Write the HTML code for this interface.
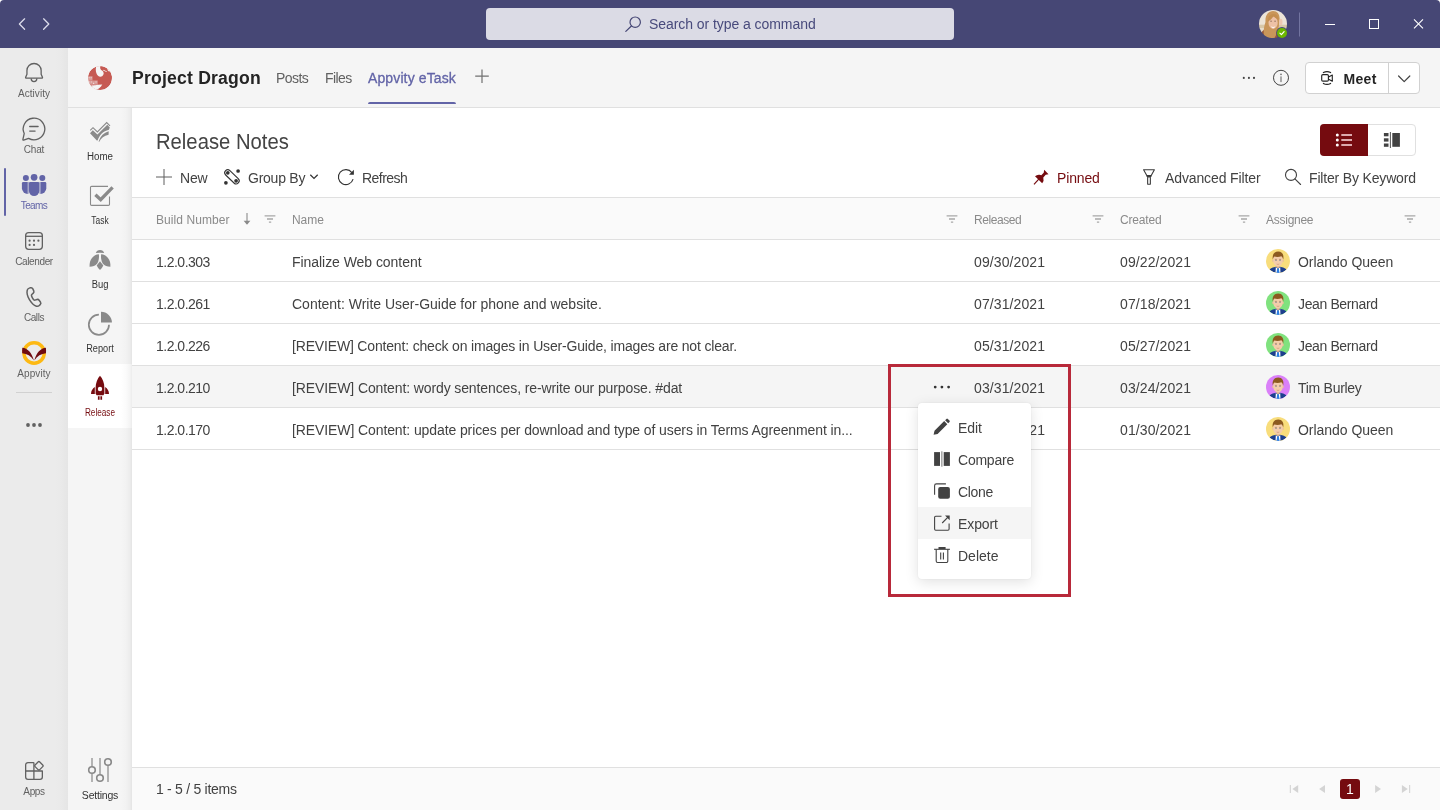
<!DOCTYPE html>
<html lang="en">
<head>
<meta charset="utf-8">
<title>Project Dragon - Appvity eTask - Release Notes</title>
<style>
*{box-sizing:border-box;margin:0;padding:0}
html,body{width:1440px;height:810px;overflow:hidden;background:#fff}
body{font-family:"Liberation Sans",Arial,sans-serif;font-size:14px;color:#424242;position:relative}
#app{position:absolute;left:0;top:0;width:1440px;height:810px;will-change:transform}
svg{display:block;position:absolute;overflow:visible}
.t{position:absolute;white-space:nowrap;line-height:1}

/* title bar */
#titlebar{position:absolute;left:0;top:0;width:1440px;height:48px;background:#464775;border-radius:4px 4px 0 0}
#search{position:absolute;left:486px;top:8px;width:468px;height:32px;background:#dbdbe5;border-radius:4px}
#search .t{left:163px;top:9px;font-size:14px;color:#484a7c}

/* left rail */
#rail{position:absolute;left:0;top:48px;width:68px;height:762px;background:linear-gradient(90deg,#ebebeb 0,#ebebeb 56px,#e9e9e9 62px,#e5e5e5 68px)}
.ri{position:absolute;left:0;width:68px;height:56px}
.ri .lbl{position:absolute;left:0;width:68px;text-align:center;top:36px;font-size:10px;line-height:12px;color:#616161}
.ri.on .lbl{color:#6264a7}
.ri.on:before{content:"";position:absolute;left:4px;top:4px;width:2px;height:48px;background:#6264a7;border-radius:1px}
#rail .sep{position:absolute;left:16px;top:344px;width:36px;height:1px;background:#d1d1d1}

/* channel header */
#chead{position:absolute;left:68px;top:48px;width:1372px;height:60px;background:#f5f5f5;border-bottom:1px solid #e0e0e0}
#chead .tab{font-size:14px;color:#616161;top:23px}
#chead .tab.on{color:#6264a7;-webkit-text-stroke:.3px #6264a7}
#chead .tab.on:after{content:"";position:absolute;left:0;right:0;top:30.800px;height:2.500px;border-radius:2px 2px 0 0;background:#6264a7}
#meet{position:absolute;left:1237px;top:14px;width:115px;height:32px;background:#fff;border:1px solid #d1d1d1;border-radius:4px}
#meet .div{position:absolute;left:82px;top:0;width:1px;height:30px;background:#d1d1d1}
#meet .t{left:37.500px;top:9px;font-size:14px;font-weight:700;color:#242424}

/* app nav */
#appnav{position:absolute;left:68px;top:108px;width:64px;height:702px;background:linear-gradient(90deg,#f5f5f5 0,#f5f5f5 53px,#f2f2f2 58px,#ececec 62px,#e4e4e4 64px)}
.ni{position:absolute;left:0;width:64px;height:64px}
.ni .lbl{position:absolute;left:0;width:64px;text-align:center;top:43px;font-size:10px;line-height:12px;color:#333}
.ni.on{background:linear-gradient(90deg,#fff 0,#fff 53px,#fbfbfb 58px,#f4f4f4 62px,#ececec 64px)}
.ni.on .lbl{color:#750b0f}

/* content */
#content{position:absolute;left:132px;top:108px;width:1308px;height:702px;background:#fff}
#title{left:24px;top:23px;font-size:22px;color:#444;transform:scaleX(.92);transform-origin:0 50%}
.tb{top:63px;font-size:14px;color:#424242}
#views{position:absolute;left:1188px;top:16px;width:96px;height:32px;border:1px solid #e0e0e0;border-radius:4px;background:#fff}
#views .on{position:absolute;left:-1px;top:-1px;width:48px;height:32px;background:#750b0f;border-radius:4px 0 0 4px}
.hdr{position:absolute;left:0;top:89px;width:1308px;height:43px;background:#fafafa;border-top:1px solid #e0e0e0;border-bottom:1px solid #e0e0e0}
.hdr .t{top:16px;font-size:12px;color:#8a8a8a}
.row{position:absolute;left:0;width:1308px;height:42px;border-bottom:1px solid #e0e0e0}
.row .t{top:15px;font-size:14px;color:#424242}
.row.hl{background:#f5f5f5}
.c1{left:24px;letter-spacing:-.5px}
.c2{left:160px}
.c3{left:842px;letter-spacing:.1px}
.c4{left:988px;letter-spacing:.1px}
.c5{left:1166px}
.av{position:absolute;left:1134px;top:9px;width:24px;height:24px;border-radius:50%;overflow:hidden}
#footer{position:absolute;left:0;top:659px;width:1308px;height:43px;background:#fafafa;border-top:1px solid #e0e0e0}
#footer .t{left:24px;top:14px;font-size:14px;color:#424242}
#pg1{position:absolute;left:1208px;top:11px;width:20px;height:20px;border-radius:3px;background:#750b0f;color:#fff;font-size:14px;line-height:20px;text-align:center}

/* menu */
#redbox{position:absolute;left:888px;top:364px;width:183px;height:233px;border:3px solid #b8293a}
#menu{position:absolute;left:918px;top:403px;width:113px;height:176px;background:#fff;border-radius:4px;box-shadow:0 3px 14px rgba(0,0,0,.12),0 0 2px rgba(0,0,0,.07)}
.mi{position:absolute;left:0;width:113px;height:32px}
.mi .t{left:40px;top:10px;font-size:14px;color:#424242}
.mi.hov{background:#f5f5f5}
</style>
</head>
<body>
<div id="app">
<!-- ===== Title bar ===== -->
<div id="titlebar">
  <svg width="1440" height="48" viewBox="0 0 1440 48" fill="none">
    <g stroke="#dedeec" stroke-width="1.25" stroke-linecap="round" stroke-linejoin="round">
      <path d="M24.6 18.8 19.4 24l5.2 5.3"/>
      <path d="M43.6 18.8 48.8 24l-5.2 5.3"/>
    </g>
    <!-- user avatar -->
    <defs><clipPath id="avc"><circle cx="1273" cy="24" r="14"/></clipPath><filter id="avb" x="-10%" y="-10%" width="120%" height="120%"><feGaussianBlur stdDeviation=".45"/></filter></defs>
    <g clip-path="url(#avc)"><g filter="url(#avb)">
      <rect x="1257" y="8" width="32" height="32" fill="#ece4d7"/>
      <rect x="1257" y="24.700" width="32" height="3.500" fill="#d8c8a8"/>
      <rect x="1257" y="28.200" width="32" height="12" fill="#e6dccb"/>
      <path d="M1259.500 39c0-6 3.500-10 8.500-10.500h11c1 3 1 7 0 10.500z" fill="#99593a"/>
      <path d="M1265.500 22c-.5-7 3-11 7.500-11s7 3.500 6.600 9l-.6 6-2 7-3 6h-9.500c-1.500-6-.800-12 1-17z" fill="#c9965a"/>
      <ellipse cx="1273.100" cy="22.800" rx="4.600" ry="6.100" fill="#edc1a6"/>
      <path d="M1267.600 21.500c.2-5 2.400-7.500 5.900-7.500 3 0 5 2 5.300 5.500-2.300-.5-4.300-2-5.300-3.700-1 2.500-3.200 4.700-5.900 5.700z" fill="#c48e50"/>
      <ellipse cx="1280.800" cy="22" rx="1.700" ry="3.200" fill="#eec8b1"/>
      <path d="M1271 26.300c1.500.9 3 .9 4.400 0-.5 1.300-1.300 1.900-2.200 1.900s-1.700-.6-2.200-1.900z" fill="#fbf3ee"/>
      <path d="M1270.200 21.200h1.800M1274.200 21.200h1.800" stroke="#8a6a55" stroke-width=".8"/>
    </g></g>
    <circle cx="1282" cy="33" r="5.900" fill="#464775"/>
    <circle cx="1282" cy="33" r="5" fill="#6bb700"/>
    <path d="M1279.900 33.200l1.500 1.500 2.700-3" stroke="#fff" stroke-width="1.200" stroke-linecap="round" stroke-linejoin="round"/>
    <path d="M1299.500 12.500v24" stroke="#7274a0" stroke-width="1"/>
    <g stroke="#fff" stroke-width="1">
      <path d="M1325 24.500h10"/>
      <rect x="1369.500" y="19.500" width="9" height="9"/>
      <path d="M1414 19.300l9 9M1423 19.300l-9 9" stroke-width="1.100"/>
    </g>
  </svg>
  <div id="search">
    <svg width="20" height="20" viewBox="624 14 20 20" style="left:138px;top:6px" fill="none" stroke="#464775" stroke-width="1.200" stroke-linecap="round">
      <circle cx="635.200" cy="22.200" r="5.200"/><path d="M631.400 26l-5.600 5.400"/>
    </svg>
    <span class="t" style="letter-spacing:-0.06px">Search or type a command</span>
  </div>
</div>

<!-- ===== Left app rail ===== -->
<div id="rail">
  <div class="ri" style="top:4px">
    <svg width="68" height="56" viewBox="0 52 68 56" fill="none" stroke="#616161" stroke-width="1.300" stroke-linejoin="round" stroke-linecap="round">
      <path d="M26.950 70.600a7.100 7.100 0 0 1 14.200 0v3.600l1.300 3.100c.2.500-.1.900-.6.900H26.250c-.5 0-.8-.4-.6-.9l1.300-3.100z"/>
      <path d="M31.200 78.800a2.800 2.800 0 0 0 5.600 0"/>
    </svg>
    <span class="lbl" style="letter-spacing:0.06px">Activity</span>
  </div>
  <div class="ri" style="top:60px">
    <svg width="68" height="56" viewBox="0 108 68 56" fill="none" stroke="#616161" stroke-width="1.300" stroke-linejoin="round" stroke-linecap="round">
      <path d="M28.600 138.350A10.800 10.800 0 1 0 24.210 133.560L22.900 139.300Q22.700 140.300 23.700 140.100Z"/>
      <path d="M29.700 126.500h8.400M29.700 131.100h5.400"/>
    </svg>
    <span class="lbl" style="letter-spacing:-0.2px">Chat</span>
  </div>
  <div class="ri on" style="top:116px">
    <svg width="68" height="56" viewBox="0 164 68 56" fill="#6264a7">
      <circle cx="25.900" cy="177.900" r="3"/><circle cx="34.100" cy="177.300" r="3.350"/><circle cx="42.300" cy="177.900" r="3"/>
      <path d="M28.900 183.400Q28.900 182.100 30.200 182.100H38Q39.300 182.100 39.300 183.400V190.700A5.200 5.200 0 0 1 28.900 190.700Z"/>
      <path d="M23.200 182.100H27.700V194A5.900 5.900 0 0 1 21.900 188.300V183.400Q21.900 182.100 23.200 182.100Z"/>
      <path d="M45 182.100H40.500V194A5.900 5.900 0 0 0 46.300 188.300V183.400Q46.300 182.100 45 182.100Z"/>
      <path d="M27.700 182.100h1.200v11.500q-.6.300-1.200.4zM40.500 182.100h-1.200v11.500q.6.300 1.200.4z" opacity=".5"/>
    </svg>
    <span class="lbl" style="letter-spacing:-0.58px">Teams</span>
  </div>
  <div class="ri" style="top:172px">
    <svg width="68" height="56" viewBox="0 220 68 56" fill="none" stroke="#616161" stroke-width="1.300">
      <rect x="25.650" y="232.550" width="16.700" height="16.800" rx="3"/>
      <path d="M25.650 236.300h16.700"/>
      <g fill="#616161" stroke="none"><circle cx="29.600" cy="240.700" r="1.100"/><circle cx="34" cy="240.700" r="1.100"/><circle cx="38.400" cy="240.700" r="1.100"/><circle cx="29.600" cy="244.900" r="1.100"/><circle cx="34" cy="244.900" r="1.100"/></g>
    </svg>
    <span class="lbl" style="letter-spacing:-0.36px">Calender</span>
  </div>
  <div class="ri" style="top:228px">
    <svg width="24" height="24" viewBox="0 0 24 24" style="left:22px;top:9px" fill="#616161">
      <path d="M7.056 2.418l1.167-.351a2.750 2.750 0 0 1 3.302 1.505l.902 2.006a2.750 2.750 0 0 1-.633 3.139L10.300 10.110a.250.250 0 0 0-.078.155c-.044.397.225 1.170.845 2.245.451.781.860 1.330 1.207 1.637.242.215.375.261.432.245l2.010-.615a2.750 2.750 0 0 1 3.034 1.020l1.281 1.776a2.750 2.750 0 0 1-.339 3.605l-.886.840a3.750 3.750 0 0 1-3.587.889c-2.754-.769-5.223-3.093-7.435-6.924-2.215-3.836-2.992-7.140-2.276-9.913a3.750 3.750 0 0 1 2.548-2.652zm.433 1.437a2.250 2.250 0 0 0-1.529 1.590c-.602 2.332.087 5.261 2.123 8.788 2.033 3.522 4.222 5.582 6.540 6.230a2.250 2.250 0 0 0 2.151-.534l.887-.840a1.250 1.250 0 0 0 .154-1.639l-1.280-1.775a1.250 1.250 0 0 0-1.380-.464l-2.015.617c-1.170.348-2.232-.593-3.372-2.568C9 11.930 8.642 10.900 8.731 10.099c.047-.416.240-.800.546-1.086l1.494-1.393a1.250 1.250 0 0 0 .288-1.427l-.902-2.006a1.250 1.250 0 0 0-1.500-.684l-1.168.352z"/>
    </svg>
    <span class="lbl" style="letter-spacing:-0.4px">Calls</span>
  </div>
  <div class="ri" style="top:284px">
    <svg width="68" height="56" viewBox="0 332 68 56">
      <circle cx="34.100" cy="353" r="10.200" fill="none" stroke="#fdb913" stroke-width="3.400"/>
      <path d="M22.300 347.800C27.500 348.300 31.800 352.500 33.900 360.600C31 356.200 27 353.600 22.200 353.300C22.100 351.500 22.100 349.600 22.300 347.800Z" fill="#6f0c11"/>
      <path d="M45.900 347.800C40.700 348.300 36.400 352.500 34.300 360.600C37.200 356.200 41.200 353.600 46 353.300C46.100 351.500 46.100 349.600 45.900 347.800Z" fill="#6f0c11"/>
    </svg>
    <span class="lbl" style="letter-spacing:0.07px">Appvity</span>
  </div>
  <div class="sep"></div>
  <svg width="68" height="20" viewBox="0 415 68 20" style="left:0;top:367px" fill="#616161">
    <circle cx="28" cy="425" r="1.900"/><circle cx="34" cy="425" r="1.900"/><circle cx="40" cy="425" r="1.900"/>
  </svg>
  <div class="ri" style="top:702px">
    <svg width="68" height="56" viewBox="0 750 68 56" fill="none" stroke="#616161" stroke-width="1.300" stroke-linejoin="round">
      <path d="M33.900 762.550H28a2.350 2.350 0 0 0-2.350 2.350V777a2.350 2.350 0 0 0 2.350 2.350H40a2.350 2.350 0 0 0 2.350-2.350V771H25.650M33.900 762.550V779.350"/>
      <rect x="35.600" y="762.500" width="6.600" height="6.600" rx="1.200" transform="rotate(45 38.900 765.800)" fill="#ebebeb"/>
    </svg>
    <span class="lbl" style="letter-spacing:-0.37px">Apps</span>
  </div>
</div>

<!-- ===== Channel header ===== -->
<div id="chead">
  <svg width="24" height="24" viewBox="88 66 24 24" style="left:20px;top:18px">
    <defs><clipPath id="lgc"><circle cx="100" cy="78" r="12"/></clipPath></defs>
    <g clip-path="url(#lgc)">
      <circle cx="100" cy="78" r="12" fill="#c65a53"/>
      <path d="M95.600 64L96.300 66.200C95.200 69.500 95.800 73.500 98 75.800C99.800 77.500 102.400 77 103.400 74.600C104.100 73 103.300 71.600 102 70.600C100.400 69.400 99.800 68 100.400 66.600L100.700 64Z" fill="#f5f5f5"/>
      <path d="M103.400 69.700l3.600 1.900-.4.500-3.500-1.600zM107.600 70.300l1.600 1.500 1-1.100 1.800 2.300 1-6-6-4z" fill="#f5f5f5"/>
      <path d="M92.500 85.800l5.500-1.100 4.300-.3c-1.400 2.400-3.400 4.200-6.200 5.400l-4.600.7z" fill="#f5f5f5"/>
      <path d="M87.500 76.300h5v4h-5zM87.500 80.600h10.200v4.200H87.500zM91 85h4.500v2.500H91z" fill="#f5f5f5" opacity=".42"/>
      <path d="M88.600 77.200h1.100v1.100h-1.100zM90.600 77.200h1.100v1.100h-1.100zM88.600 81.500h1.100v1.100h-1.100zM90.800 81.500h1.100v1.100h-1.100zM93 82.800h1.200v1.200H93zM95.500 81.500h1.100v1.100h-1.100zM92 85.600h1v1h-1z" fill="#f5f5f5" opacity=".7"/>
    </g>
  </svg>
  <span class="t" style="left:64px;top:22px;font-size:17.600px;font-weight:700;color:#242424;letter-spacing:0.2px">Project Dragon</span>
  <span class="t tab" style="left:208px;letter-spacing:-0.58px">Posts</span>
  <span class="t tab" style="left:257px;letter-spacing:-0.55px">Files</span>
  <span class="t tab on" style="left:300px;letter-spacing:0.12px">Appvity eTask</span>
  <svg width="16" height="16" viewBox="474 68 16 16" style="left:406px;top:20px" fill="none" stroke="#707070" stroke-width="1.200">
    <path d="M475.200 76.200h13.600M482 69.400v13.600"/>
  </svg>
  <svg width="60" height="24" viewBox="1236 66 60 24" style="left:1168px;top:18px" fill="none">
    <g fill="#424242"><circle cx="1243.800" cy="77.900" r="1.050"/><circle cx="1248.900" cy="77.900" r="1.050"/><circle cx="1254" cy="77.900" r="1.050"/></g>
    <circle cx="1281" cy="77.800" r="7.500" stroke="#424242" stroke-width="1"/>
    <circle cx="1281" cy="74.400" r=".800" fill="#6a6a6a"/>
    <path d="M1281 76.700v4.900" stroke="#6a6a6a" stroke-width="1.100" stroke-linecap="round"/>
  </svg>
  <div id="meet">
    <div class="div"></div>
    <svg width="115" height="32" viewBox="1305 62 115 32" style="left:-1px;top:-1px" fill="none" stroke="#242424" stroke-width="1.150" stroke-linecap="round" stroke-linejoin="round">
      <rect x="1321.700" y="74.650" width="6.700" height="6.500" rx="1.200"/>
      <path d="M1328.600 76.900l3.700-1.900v6.200l-3.700-1.900"/>
      <path d="M1323.400 72.600Q1327 70.600 1330.600 72.600M1323.400 83.400Q1327 85.400 1330.600 83.400"/>
      <path d="M1398.600 76l5.600 5.600 5.600-5.600" stroke="#424242" stroke-width="1.200"/>
    </svg>
    <span class="t" style="letter-spacing:0.3px">Meet</span>
  </div>
</div>

<!-- ===== Appvity eTask side navigation ===== -->
<div id="appnav">
  <div class="ni" style="top:0">
    <svg width="64" height="64" viewBox="68 108 64 64" fill="#8a8a8a">
      <path d="M90.200 130.300 93 127.700l4.400 4.300 9.300-9.500 3.300 3.300" fill="none" stroke="#8a8a8a" stroke-width="1.100"/>
      <path d="M90 133.200L92.800 130.300L97.400 134.400L107.300 124.700L109.800 127.400L108.900 129.800C103 131.300 99.500 135 97.600 140.400L96.800 140.500Z"/>
      <path d="M98.600 141.800C100.500 135.800 103.800 132.800 108.700 131.300L108.600 134.800C104 135.800 101 138 99.300 141.800Z"/>
    </svg>
    <span class="lbl" style="transform:scaleX(0.976)">Home</span>
  </div>
  <div class="ni" style="top:64px">
    <svg width="64" height="64" viewBox="68 172 64 64" fill="none" stroke="#8a8a8a">
      <path d="M108 186.400H91.600a1.100 1.100 0 0 0-1.100 1.100V204.300a1.100 1.100 0 0 0 1.100 1.100H108.400a1.100 1.100 0 0 0 1.100-1.100V196.500" stroke-width="1.100"/>
      <path d="M95.400 194.700l5.300 5 11.900-12.400" stroke-width="3.300"/>
    </svg>
    <span class="lbl" style="transform:scaleX(0.84)">Task</span>
  </div>
  <div class="ni" style="top:128px">
    <svg width="64" height="64" viewBox="68 236 64 64" fill="#8a8a8a">
      <path d="M95.800 253A4.400 4.400 0 0 1 104.200 253Q100 252.300 95.800 253Z"/>
      <path d="M98.900 254.200C93.500 254.600 89 259.500 89.600 266.800C92.800 266.700 95.400 265.500 97.300 263.400C98.800 260.800 99.300 257.500 98.900 254.200Z"/>
      <path d="M101.100 254.200C106.500 254.600 111 259.500 110.400 266.800C107.200 266.700 104.600 265.500 102.700 263.400C101.200 260.800 100.700 257.500 101.100 254.200Z"/>
      <path d="M100 261.200L103.300 265.600Q102 268.500 100 270Q98 268.500 96.700 265.600Z"/>
    </svg>
    <span class="lbl" style="transform:scaleX(0.94)">Bug</span>
  </div>
  <div class="ni" style="top:192px">
    <svg width="64" height="64" viewBox="68 300 64 64" fill="none">
      <path d="M98.900 314.700A10.100 10.100 0 1 0 109 324.800" stroke="#8a8a8a" stroke-width="1.700"/>
      <path d="M101 322.600V311.700A10.900 10.900 0 0 1 111.900 322.600Z" fill="#8a8a8a"/>
    </svg>
    <span class="lbl" style="transform:scaleX(0.915)">Report</span>
  </div>
  <div class="ni on" style="top:256px">
    <svg width="64" height="64" viewBox="68 364 64 64" fill="#750b0f">
      <path d="M100 375.800C102.500 378.500 104.400 383 104.400 388V393.500L103.400 395.200H96.600L95.600 393.500V388C95.600 383 97.500 378.500 100 375.800Z"/>
      <circle cx="100" cy="389" r="2.200" fill="#fff"/>
      <path d="M94.800 387C92.500 388.500 91 391 91 394H94.800Z"/>
      <path d="M105.200 387C107.500 388.500 109 391 109 394H105.200Z"/>
      <path d="M97.900 396.200h1.700v3.500h-1.700zM100.400 396.200h1.700v3.500h-1.700z"/>
    </svg>
    <span class="lbl" style="transform:scaleX(0.82)">Release</span>
  </div>
  <div class="ni" style="top:638px">
    <svg width="64" height="64" viewBox="68 746 64 64" fill="none">
      <path d="M92 758v24M100 758v24M108 758v24" stroke="#b3b3b3" stroke-width="2"/>
      <g fill="#f5f5f5" stroke="#8a8a8a" stroke-width="1.600"><circle cx="92" cy="770" r="3.300"/><circle cx="100" cy="778" r="3.300"/><circle cx="108" cy="762" r="3.300"/></g>
    </svg>
    <span class="lbl" style="top:43px;font-size:10.500px;letter-spacing:-0.21px">Settings</span>
  </div>
</div>

<!-- ===== Main content ===== -->
<div id="content">
  <svg width="0" height="0" style="left:0;top:0">
    <defs>
      <clipPath id="pc"><circle cx="12" cy="12" r="12"/></clipPath>
      <g id="person" clip-path="url(#pc)">
        <path d="M2.500 24c0-3.200 2.300-5.200 5.500-5.700l2-.5h4l2 .5c3.200.5 5.500 2.500 5.500 5.700z" fill="#1d3f8e"/>
        <path d="M9.800 17.900l2.200 2 2.200-2 .3 6.100h-5z" fill="#fff"/>
        <path d="M11.200 19.300h1.600l.7 4.700h-3z" fill="#2b7fe3"/>
        <path d="M10.300 15.500h3.400v2.600L12 19.600l-1.700-1.500z" fill="#e3b58f"/>
        <ellipse cx="7.100" cy="11.800" rx=".9" ry="1.400" fill="#e9bd98"/><ellipse cx="16.900" cy="11.800" rx=".9" ry="1.400" fill="#e9bd98"/>
        <path d="M7.300 9.500c0-3.300 2-5.200 4.700-5.200s4.700 1.900 4.700 5.200v2.300c0 3.200-2.400 5.700-4.700 5.700s-4.700-2.500-4.700-5.700z" fill="#f3cdab"/>
        <path d="M6.800 10.600c-.8-4.800 1.300-8 5.400-8 4 0 6 3 5 8-.3-1.500-.9-2.600-1.800-3.300-2.400.9-5 .9-7 .3-.9.700-1.400 1.700-1.600 3z" fill="#8c5a1f"/>
        <path d="M8.900 10.400h2M13.100 10.400h2" stroke="#7a5a3a" stroke-width=".5"/>
        <circle cx="10" cy="11.500" r=".55" fill="#5a6f8a"/><circle cx="14" cy="11.500" r=".55" fill="#5a6f8a"/>
        <path d="M10.700 15c.9.500 1.700.5 2.600 0" stroke="#c98a6a" stroke-width=".6" fill="none"/>
      </g>
    </defs>
  </svg>

  <span class="t" id="title" style="letter-spacing:0px">Release Notes</span>

  <div id="views">
    <div class="on"></div>
    <svg width="96" height="32" viewBox="1320 124 96 32" style="left:-1px;top:-1px">
      <g fill="#fff"><circle cx="1337.300" cy="135" r="1.500"/><circle cx="1337.300" cy="140" r="1.500"/><circle cx="1337.300" cy="145" r="1.500"/></g>
      <path d="M1341.300 135h10.700M1341.300 140h10.700M1341.300 145h10.700" stroke="#dcaaad" stroke-width="2"/>
      <g fill="#424242"><rect x="1383.900" y="133" width="4.600" height="3.300"/><rect x="1383.900" y="138.300" width="4.600" height="3.300"/><rect x="1383.900" y="143.500" width="4.600" height="3.300"/><rect x="1392.300" y="133" width="7.600" height="13.800"/><rect x="1389.900" y="132" width=".9" height="16"/></g>
    </svg>
  </div>

  <!-- toolbar -->
  <svg width="280" height="24" viewBox="152 165 280 24" style="left:20px;top:57px" fill="none">
    <path d="M156 177h16M164 169v16" stroke="#5e5e5e" stroke-width="1"/>
    <path d="M227.800 172.800l8.300 8" stroke="#333" stroke-width="7.200" stroke-linecap="round"/>
    <path d="M227.800 172.800l8.300 8" stroke="#fff" stroke-width="5" stroke-linecap="round"/>
    <g fill="#333"><circle cx="227.800" cy="172.800" r="1.850"/><circle cx="236.100" cy="180.800" r="1.850"/><circle cx="238.100" cy="171" r="1.850"/><circle cx="225.900" cy="182.800" r="1.850"/></g>
    <path d="M310.300 174.700l3.700 3.700 3.700-3.700" stroke="#333" stroke-width="1.250"/>
    <path d="M351.900 172.600A7.500 7.500 0 1 0 353.100 179.200" stroke="#333" stroke-width="1.100"/>
    <path d="M353.900 169.800v5h-4.900z" fill="#333"/>
  </svg>
  <span class="t tb" style="left:48px;letter-spacing:-0.15px">New</span>
  <span class="t tb" style="left:116px;letter-spacing:-0.24px">Group By</span>
  <span class="t tb" style="left:230px;letter-spacing:-0.55px">Refresh</span>

  <svg width="280" height="24" viewBox="1030 165 280 24" style="left:898px;top:57px" fill="none">
    <path d="M1035 176.300Q1037 174.500 1039.500 174.800L1041.300 175.300L1043.700 172.700L1044.200 169.700L1048.500 174.300L1045.700 174.800L1043.300 177.500Q1044.300 180.700 1042.200 183.300Z" fill="#750b0f"/>
    <path d="M1034 184.300l4.800-5.100" stroke="#750b0f" stroke-width="1.200"/>
    <g stroke="#3a3a3a" stroke-width="1.100" stroke-linejoin="round">
      <path d="M1143.600 169.700H1154.400L1151.200 175.600H1146.800Z"/>
      <path d="M1146.600 176.100h4.800" stroke-width="1.800"/>
      <rect x="1147.650" y="177" width="2.700" height="7.300" rx=".4"/>
    </g>
    <circle cx="1291" cy="174.900" r="5.500" stroke="#424242" stroke-width="1.100"/>
    <path d="M1294.900 178.800l5.700 5.700" stroke="#424242" stroke-width="1.100" stroke-linecap="round"/>
  </svg>
  <span class="t tb" style="left:925px;color:#750b0f;letter-spacing:-0.16px">Pinned</span>
  <span class="t tb" style="left:1033px;letter-spacing:-0.12px">Advanced Filter</span>
  <span class="t tb" style="left:1177px;letter-spacing:-0.17px">Filter By Keyword</span>

  <!-- grid header -->
  <div class="hdr">
    <svg width="1308" height="41" viewBox="132 198 1308 41" style="left:0;top:0" fill="none">
      <path d="M247 213v11" stroke="#8a8a8a" stroke-width="1.100"/>
      <path d="M243.600 220.800l3.400 4 3.400-4z" fill="#8a8a8a"/>
      <g stroke="#a8a8a8" stroke-width="1.300">
        <path id="fl" d="M264.600 215.800h10.800M267 219h6M268.900 222.100h2.300"/>
        <use href="#fl" x="682"/><use href="#fl" x="828"/><use href="#fl" x="974"/><use href="#fl" x="1140"/>
      </g>
    </svg>
    <span class="t" style="left:24px;letter-spacing:0.07px">Build Number</span>
    <span class="t" style="left:160px;letter-spacing:-0.07px">Name</span>
    <span class="t" style="left:842px;letter-spacing:-0.44px">Released</span>
    <span class="t" style="left:988px;letter-spacing:-0.18px">Created</span>
    <span class="t" style="left:1134px;letter-spacing:-0.26px">Assignee</span>
  </div>

  <div class="row" style="top:132px">
    <span class="t c1">1.2.0.303</span><span class="t c2" style="letter-spacing:-0.05px">Finalize Web content</span>
    <span class="t c3">09/30/2021</span><span class="t c4">09/22/2021</span>
    <svg class="av" viewBox="0 0 24 24" style="background:#f8dd7c"><use href="#person"/></svg>
    <span class="t c5" style="letter-spacing:-0.04px">Orlando Queen</span>
  </div>
  <div class="row" style="top:174px">
    <span class="t c1">1.2.0.261</span><span class="t c2" style="letter-spacing:-0.01px">Content: Write User-Guide for phone and website.</span>
    <span class="t c3">07/31/2021</span><span class="t c4">07/18/2021</span>
    <svg class="av" viewBox="0 0 24 24" style="background:#80e27e"><use href="#person"/></svg>
    <span class="t c5" style="letter-spacing:-0.37px">Jean Bernard</span>
  </div>
  <div class="row" style="top:216px">
    <span class="t c1">1.2.0.226</span><span class="t c2" style="letter-spacing:-0.17px">[REVIEW] Content: check on images in User-Guide, images are not clear.</span>
    <span class="t c3">05/31/2021</span><span class="t c4">05/27/2021</span>
    <svg class="av" viewBox="0 0 24 24" style="background:#80e27e"><use href="#person"/></svg>
    <span class="t c5" style="letter-spacing:-0.37px">Jean Bernard</span>
  </div>
  <div class="row hl" style="top:258px">
    <span class="t c1">1.2.0.210</span><span class="t c2" style="letter-spacing:-0.11px">[REVIEW] Content: wordy sentences, re-write our purpose. #dat</span>
    <svg width="20" height="8" viewBox="932 383 20 8" style="left:800px;top:17px" fill="#333"><circle cx="935.200" cy="387.100" r="1.400"/><circle cx="941.900" cy="387.100" r="1.400"/><circle cx="948.600" cy="387.100" r="1.400"/></svg>
    <span class="t c3">03/31/2021</span><span class="t c4">03/24/2021</span>
    <svg class="av" viewBox="0 0 24 24" style="background:#da80f8"><use href="#person"/></svg>
    <span class="t c5" style="letter-spacing:-0.28px">Tim Burley</span>
  </div>
  <div class="row" style="top:300px">
    <span class="t c1">1.2.0.170</span><span class="t c2" style="letter-spacing:-0.1px">[REVIEW] Content: update prices per download and type of users in Terms Agreenment in...</span>
    <span class="t c3">01/31/2021</span><span class="t c4">01/30/2021</span>
    <svg class="av" viewBox="0 0 24 24" style="background:#f8dd7c"><use href="#person"/></svg>
    <span class="t c5" style="letter-spacing:-0.04px">Orlando Queen</span>
  </div>

  <div id="footer">
    <span class="t" style="letter-spacing:-0.28px">1 - 5 / 5 items</span>
    <svg width="130" height="20" viewBox="1286 779 130 20" style="left:1154px;top:11px" fill="#d4d4d4">
      <path d="M1289.800 785h1.100v8h-1.100zM1298.200 785v8l-5.800-4z"/>
      <path d="M1325 785v8l-5.900-4z"/>
      <path d="M1375.100 785v8l5.900-4z"/>
      <path d="M1401.900 785v8l5.800-4zM1409.100 785h1.100v8h-1.100z"/>
    </svg>
    <div id="pg1">1</div>
  </div>
</div>

<!-- ===== Row context menu with highlight ===== -->
<div id="redbox"></div>
<div id="menu">
  <div class="mi" style="top:8px">
    <svg width="24" height="24" viewBox="930 415 24 24" style="left:12px;top:4px" fill="#424242">
      <path d="M933.600 434.800l.9-4 9.700-9.700 3.100 3.100-9.700 9.700zM945.100 420.200l1.300-1.300a1 1 0 0 1 1.400 0l1.700 1.700a1 1 0 0 1 0 1.400l-1.300 1.300z"/>
    </svg>
    <span class="t" style="letter-spacing:-0.1px">Edit</span>
  </div>
  <div class="mi" style="top:40px">
    <svg width="24" height="24" viewBox="930 447 24 24" style="left:12px;top:4px" fill="#424242">
      <rect x="934.100" y="452.100" width="5.900" height="13.800"/><rect x="943.700" y="452.100" width="6.200" height="13.800"/><rect x="941.500" y="451.300" width=".800" height="15.400" fill="#555"/>
    </svg>
    <span class="t" style="letter-spacing:-0.23px">Compare</span>
  </div>
  <div class="mi" style="top:72px">
    <svg width="24" height="24" viewBox="930 479 24 24" style="left:12px;top:4px" fill="#424242">
      <path d="M945.900 483.900H936.400a1.800 1.800 0 0 0-1.800 1.800V494.800" fill="none" stroke="#424242" stroke-width="1.100"/>
      <rect x="938.200" y="487.100" width="11.700" height="11.700" rx="2"/>
    </svg>
    <span class="t" style="letter-spacing:-0.3px">Clone</span>
  </div>
  <div class="mi hov" style="top:104px">
    <svg width="24" height="24" viewBox="930 511 24 24" style="left:12px;top:4px" fill="none" stroke="#424242" stroke-width="1.100">
      <path d="M941.500 516.200H935.700a1.100 1.100 0 0 0-1.100 1.100V529.100a1.100 1.100 0 0 0 1.100 1.100H948a1.100 1.100 0 0 0 1.100-1.100V523.500"/>
      <path d="M942.200 523l6.300-6.300"/>
      <path d="M945 515.600h4.700v4.700z" fill="#424242" stroke="none"/>
    </svg>
    <span class="t" style="letter-spacing:-0.1px">Export</span>
  </div>
  <div class="mi" style="top:136px">
    <svg width="24" height="24" viewBox="930 543 24 24" style="left:12px;top:4px" fill="none" stroke="#424242" stroke-width="1.100">
      <path d="M934.100 549.300h15.800"/>
      <path d="M938.500 547h7.100v2h-7.100z" fill="#424242" stroke="none"/>
      <path d="M936.200 549.300V561a1.500 1.500 0 0 0 1.500 1.500H946.300a1.500 1.500 0 0 0 1.500-1.500V549.300"/>
      <path d="M940.700 552.600v6.800M943.400 552.600v6.800"/>
    </svg>
    <span class="t" style="letter-spacing:0px">Delete</span>
  </div>
</div>

</div>
</body>
</html>
